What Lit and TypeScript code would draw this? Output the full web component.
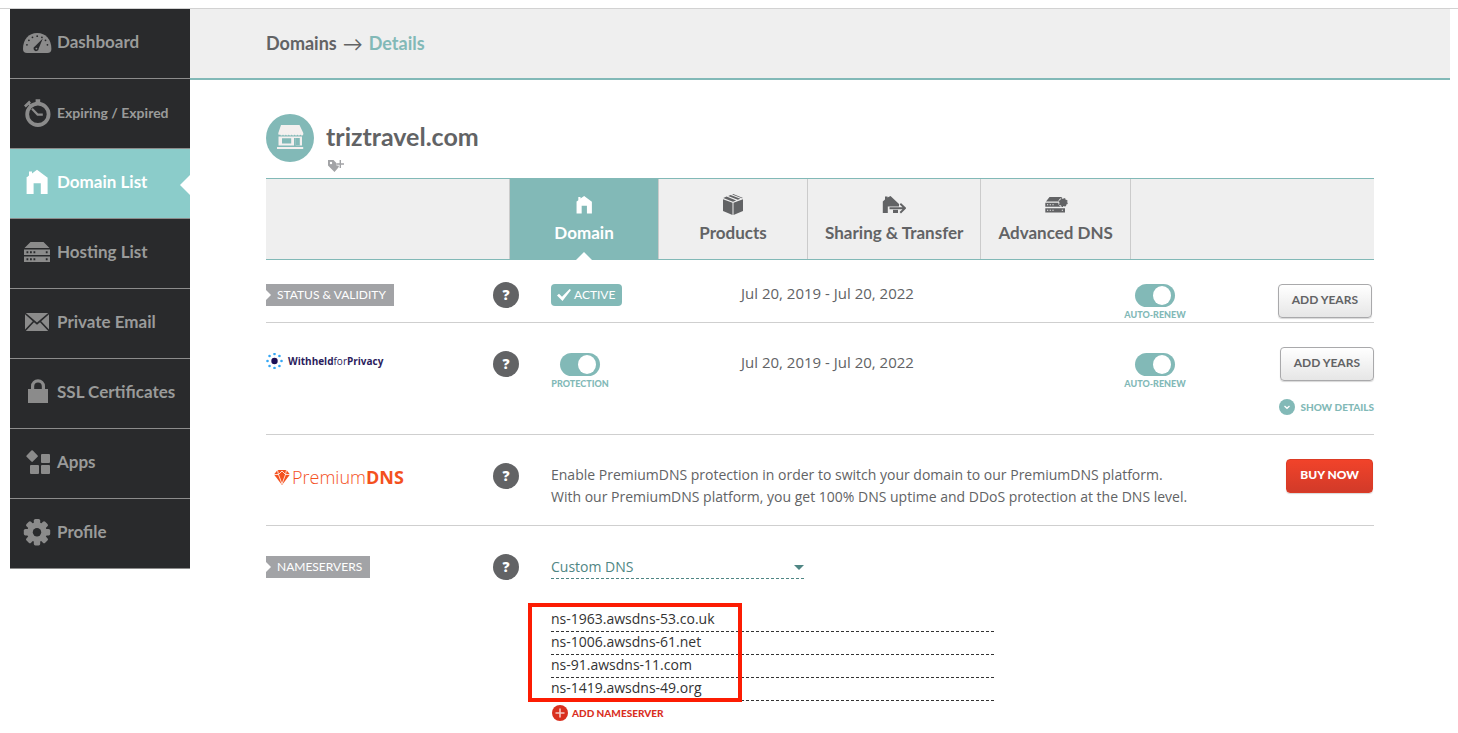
import { LitElement, html, svg, css, nothing, type TemplateResult, type SVGTemplateResult } from "lit";
import { customElement, property, state } from "lit/decorators.js";
import { classMap } from "lit/directives/class-map.js";

/* ---------- icons ---------- */

const ticks = [-80, -53, -27, 0, 27, 53, 80].map((a) => {
  const r = (a * Math.PI) / 180;
  return svg`<circle cx=${15.2 + 10.4 * Math.sin(r)} cy=${18.6 - 10.4 * Math.cos(r)} r="0.9" fill="#292a2c"/>`;
});

const cogTeeth = [0, 45, 90, 135].map(
  (a) => svg`<rect x="11.8" y="1" width="6.4" height="26.4" rx="1.6" transform="rotate(${a} 15 14.2)"/>`,
);

const housePath = "M4.6 26V10H4L7 7.6V3.4h3v2L15 1.8 26 10h-.4v16H18.800V15.200H11.600V26Z";

const navIcons: Record<string, SVGTemplateResult> = {
  gauge: svg`<path d="M1 21C1 11.500 6.500 5 15.200 5S29.400 11.500 29.400 21q0 4-4 4H5q-4 0-4-4Z"/>${ticks}
    <path d="M20.800 10.600 16.700 20.400A2.600 2.600 0 1 1 13 18.200Z" fill="#292a2c"/><circle cx="14.400" cy="20.600" r="0.900"/>`,
  clock: svg`<circle cx="15.900" cy="16.300" r="10.700" fill="none" stroke="currentColor" stroke-width="3.800"/>
    <path d="M13.600 1.200h4.600v4h-4.600ZM2 7.400 7.200 2.600 9 4.800 3.800 9.600Z"/><path d="M6 5 10 9" stroke="currentColor" stroke-width="2"/>
    <path d="M10 10.800 15.600 16.600H20.800" fill="none" stroke="currentColor" stroke-width="2.200"/>`,
  house: svg`<path d=${housePath}/>`,
  server: svg`<path d="M8.500 4H21.500L27.500 10H2.500ZM2 11.500H28v5.500H2ZM2 18.500H28V24H2Z"/>
    <path d="M4.500 13.200h1.800v2H4.500ZM8 13.200h1.800v2H8ZM11.500 13.200h1.800v2h-1.800ZM23.800 13.200h1.800v2h-1.800ZM4.500 20.200h1.800v2H4.500ZM8 20.200h1.800v2H8ZM11.500 20.200h1.800v2h-1.800ZM23.800 20.200h1.800v2h-1.800Z" fill="#292a2c"/>`,
  mail: svg`<path d="M3.800 5H26.200L15 14.600ZM3 6.300 10.800 13.200 3 21.600ZM27 6.300V21.600L19.200 13.200ZM12 14.200 15 16.800 18 14.200 26.200 23H3.800Z"/>`,
  lock: svg`<path d="M6 11H26V25H6Z"/><path d="M10.600 12V8.200a5.400 5.400 0 0 1 10.800 0V12" fill="none" stroke="currentColor" stroke-width="3.200"/>`,
  apps: svg`<rect x="5.700" y="3.700" width="8.800" height="8.800" rx="1" transform="rotate(45 10.100 8.100)"/>
    <rect x="19" y="6" width="9" height="9" rx="1"/><rect x="8" y="17" width="9" height="9" rx="1"/><rect x="19" y="17" width="9" height="9" rx="1"/>`,
  cog: svg`<circle cx="15" cy="14.200" r="10"/>${cogTeeth}<circle cx="15" cy="14.200" r="4.200" fill="#292a2c"/>`,
};

const tabIcons: Record<string, SVGTemplateResult> = {
  house: svg`<path transform="translate(1.200 2.600) scale(.73)" d=${housePath}/>`,
  box: svg`<path d="M2 7.200 11.500 10.800V23L2 19ZM22 7.200 12.500 10.800V23L22 19Z"/>
    <path d="M2.300 6 5.600 4.600 15.200 8.400 12 9.700ZM7.200 4 9.600 3 19.400 6.800 16.800 7.800ZM11.200 2.400 12.200 2 22 6 20.900 6.300Z"/>`,
  share: svg`<path d="M0.800 21V9.400L3 7.500V4.500h2.500V5.400L8.500 4 17 12v2.500H9.500V14.500H5.800V21Z"/>
    <path d="M11 17.800h5V21h-5Z"/><path d="M7.500 16.200H22M18.300 11.700 23 16.200 18.300 20.700" fill="none" stroke="currentColor" stroke-width="1.900"/>`,
  dns: svg`<path d="M5.500 5H18L19 9.500H2ZM1.300 10.800H21V14.800H1.300ZM1.300 16.200H21V20.400H1.300Z"/><circle cx="19.200" cy="10.500" r="5" fill="#efefef"/>
    <circle cx="19.200" cy="10.500" r="3.800"/><circle cx="19.200" cy="10.500" r="3.900" fill="none" stroke="currentColor" stroke-width="1.400" stroke-dasharray="1.600 1.460"/>
    <path d="M3 12.300h1.200v1H3ZM5.700 12.300h1.200v1H5.700ZM8.400 12.300h1.200v1H8.400ZM3 17.800h1.200v1H3ZM5.700 17.800h1.200v1H5.700ZM8.400 17.800h1.200v1H8.400ZM17.800 17.800h1.200v1h-1.200Z" fill="#efefef"/>`,
};

/* ---------- small elements ---------- */

@customElement("side-nav")
class SideNav extends LitElement {
  @property() current = "Domain List";

  static styles = css`
    :host { display: block; flex: 0 0 180px; }
    a {
      position: relative;
      display: flex;
      align-items: center;
      gap: 5px;
      height: 69px;
      padding-left: 12px;
      border-bottom: 1px solid #8c8c8c;
      background: #292a2c;
      color: #9a9b9a;
      font: 700 17px/24px Lato, sans-serif;
      text-decoration: none;
    }
    a.small { font-size: 14px; }
    svg { width: 30px; height: 31px; color: #8b8b8b; fill: currentColor; }
    span { padding-bottom: 3px; white-space: nowrap; }
    a.small span { padding-bottom: 2px; }
    a.on { background: #8bccca; color: #fff; }
    a.on svg { color: #fff; }
    a.on::after {
      content: "";
      position: absolute;
      right: 0;
      top: 26px;
      border: 10px solid transparent;
      border-right-color: #fff;
      border-left-width: 0;
    }
  `;

  render() {
    const items: [string, string][] = [
      ["Dashboard", "gauge"],
      ["Expiring / Expired", "clock"],
      ["Domain List", "house"],
      ["Hosting List", "server"],
      ["Private Email", "mail"],
      ["SSL Certificates", "lock"],
      ["Apps", "apps"],
      ["Profile", "cog"],
    ];
    return html`<nav>
      ${items.map(
        ([label, icon]) => html`<a
          href="#"
          class=${classMap({ on: label === this.current, small: label.length > 16 })}
          ><svg viewBox="0 0 30 31" aria-hidden="true">${navIcons[icon]}</svg><span>${label}</span></a
        >`,
      )}
    </nav>`;
  }
}

@customElement("toggle-switch")
class ToggleSwitch extends LitElement {
  @property() label = "";
  @state() private on = true;

  static styles = css`
    :host { display: block; }
    label {
      display: inline-flex;
      flex-direction: column;
      align-items: center;
      gap: 1px;
      min-width: 58px;
      color: #82b9b7;
      font: 900 9px/14px Lato, sans-serif;
      white-space: nowrap;
      cursor: pointer;
    }
    input {
      appearance: none;
      display: flex;
      width: 40px;
      height: 23px;
      margin: 0;
      padding: 2px 4px;
      border-radius: 12px;
      background: #b5b6b8;
      box-sizing: border-box;
    }
    input:checked { background: #82b9b7; justify-content: flex-end; }
    input::before {
      content: "";
      width: 18px;
      height: 19px;
      border-radius: 50%;
      background: #fff;
    }
  `;

  render() {
    return html`<label
      ><input type="checkbox" .checked=${this.on} @change=${() => (this.on = !this.on)} />${this.label}</label
    >`;
  }
}

/* ---------- page ---------- */

@customElement("app-root")
class AppRoot extends LitElement {
  static styles = css`
    :host {
      display: block;
      padding-top: 8px;
      background: #fff;
      color: #626365;
      font: 14px/22px "Open Sans", sans-serif;
    }
    svg { fill: currentColor; }
    button { font: inherit; color: inherit; cursor: pointer; }
    .page {
      display: flex;
      align-items: flex-start;
      padding: 0 8px 0 10px;
      border-top: 1px solid #d2d2d2;
    }
    main { flex: 1; min-width: 0; }
    .crumbs {
      display: flex;
      align-items: center;
      height: 69px;
      padding: 0 76px;
      background: #efefef;
      border-bottom: 2px solid #82b9b7;
      font: 700 18px/24px Lato, "DejaVu Sans", sans-serif;
    }
    .crumbs ol { display: flex; gap: 6px; margin: 0; padding: 0 0 2px; list-style: none; }
    .crumbs a { color: inherit; text-decoration: none; }
    .crumbs .here { color: #82b9b7; }
    .crumbs .arrow { font-weight: 400; font-size: 20px; }
    .body { padding: 34px 76px 12px; }

    .title { display: grid; grid-template: 44px 20px / 48px 1fr; column-gap: 12px; }
    .title .shop { display: block; width: 48px; height: 48px; }
    h1 { margin: 0; font: 700 25px/44px Lato, sans-serif; }
    .tagbtn {
      grid-column: 2;
      display: flex;
      align-items: flex-end;
      width: 20px;
      height: 16px;
      padding: 0;
      border: 0;
      background: none;
      color: #a2a3a6;
    }

    .tabs {
      display: flex;
      justify-content: center;
      background: #efefef;
      border: 1px solid #82b9b7;
      border-width: 1px 0;
    }
    .tab {
      position: relative;
      display: flex;
      flex-direction: column;
      align-items: center;
      gap: 5px;
      box-sizing: border-box;
      min-width: 149px;
      height: 80px;
      padding: 13px 17px 0;
      border-right: 1px solid #cbcbcb;
      color: #626365;
      font: 700 17px/24px Lato, sans-serif;
      text-decoration: none;
      white-space: nowrap;
    }
    .tab:first-child { min-width: 150px; border-left: 1px solid #cbcbcb; }
    .tab svg { width: 24px; height: 24px; }
    .tab.on { background: #82b9b7; color: #fff; }
    .tab.on::after {
      content: "";
      position: absolute;
      bottom: -1px;
      border: 8px solid transparent;
      border-bottom-color: #fff;
      border-top-width: 0;
    }

    .row {
      display: grid;
      grid-template-columns: 227px 58px 190px minmax(0, 1fr) 60px 189px;
      align-items: start;
      padding: 22px 0 0;
      border-bottom: 1px solid #cfcfcf;
    }
    .cell, .act { padding-top: 2px; }
    .row.tall { padding: 24px 0 19px; }
    .tall .help { margin-top: 4px; }
    .tall .cell { padding-top: 6px; }
    .tall .act { padding-top: 0; }
    .row.dns { grid-template-columns: 227px 58px minmax(0, 1fr) auto; padding-bottom: 17px; }
    .dns .cell { padding-top: 5px; }
    .row.last { padding: 28px 0 0; border: 0; }
    .rest { grid-column: 3 / 7; }
    p { margin: 0; }
    .date { font-size: 15px; line-height: 18px; }
    .toggle { display: flex; justify-content: center; }

    .tag {
      position: relative;
      display: inline-block;
      vertical-align: top;
      padding: 0 8px 0 11px;
      background: #a2a3a6;
      color: #fff;
      font: 400 12px/22px Lato, sans-serif;
    }
    .tag::before {
      content: "";
      position: absolute;
      left: 0;
      top: 6px;
      border: 5px solid transparent;
      border-left-color: #fff;
      border-right-width: 0;
    }
    .help {
      width: 26px;
      height: 26px;
      padding: 0;
      border: 0;
      border-radius: 50%;
      background: #626365;
      color: #fff;
      font: 800 14px/26px "Open Sans", sans-serif;
    }
    .active {
      display: inline-flex;
      vertical-align: top;
      align-items: center;
      gap: 2px;
      padding: 0 7px 0 5px;
      border-radius: 4px;
      background: #82b9b7;
      color: #fff;
      font: 400 12px/22px Lato, sans-serif;
    }
    .act { display: flex; flex-direction: column; align-items: flex-end; gap: 18px; }
    .btn {
      height: 34px;
      padding: 0 13px 2px;
      border: 1px solid #a9a9ab;
      border-radius: 4px;
      background: linear-gradient(#fff, #e6e6e6);
      box-shadow: 0 1px 1px #d8d8d8;
      font: 700 12px/20px Lato, sans-serif;
      white-space: nowrap;
    }
    .first .btn { margin-right: 2px; }
    .btn.buy {
      margin-right: 1px;
      border-color: #dc3b25;
      background: linear-gradient(#f1432a, #d23a29);
      color: #fff;
      font-weight: 900;
    }
    .link {
      display: flex;
      align-items: center;
      gap: 5px;
      padding: 0;
      border: 0;
      background: none;
      color: #82b9b7;
      font: 900 10px/16px Lato, sans-serif;
      white-space: nowrap;
    }
    .link svg { width: 16px; height: 16px; }
    .link.add { margin-top: 4px; padding-left: 1px; gap: 4px; color: #d9301f; }

    .withheld { display: flex; align-items: center; gap: 5px; color: #2b1c5c; font-size: 10px; line-height: 16px; }
    .premium { display: flex; align-items: center; gap: 2px; padding-left: 8px; color: #f4511e; font-size: 18px; line-height: 26px; font-weight: 300; }
    .premium b { font-weight: 700; }

    .pick { display: flex; align-items: center; width: 253px; border-bottom: 1px dashed #4f8684; color: #4f8684; }
    .pick select {
      appearance: none;
      flex: 1;
      height: 22px;
      padding: 0 0 2px;
      border: 0;
      background: none;
      color: inherit;
      font: inherit;
    }
    .pick svg { width: 10px; height: 5px; pointer-events: none; }
    .servers { position: relative; max-width: 443px; margin: 30px 0 0; padding: 0; list-style: none; }
    .servers input {
      display: block;
      box-sizing: border-box;
      width: 100%;
      height: 23px;
      padding: 0 0 3px;
      border: 0;
      border-bottom: 1px dashed #333;
      background: none;
      color: #333;
      font: inherit;
    }
    .mark {
      position: absolute;
      inset: -6px auto -1px -23px;
      width: 214px;
      box-sizing: border-box;
      border: 4px solid #fc1c03;
      pointer-events: none;
    }
  `;

  private tab(label: string, icon: string, on = false) {
    return html`<a href="#" class=${classMap({ tab: true, on })}
      ><svg viewBox="0 0 24 24" aria-hidden="true">${tabIcons[icon]}</svg>${label}</a
    >`;
  }

  private row(kind: string, label: TemplateResult, content: TemplateResult | typeof nothing) {
    return html`<section class="row ${kind}">
      <div class="cell">${label}</div>
      <button class="help" aria-label="Help">?</button>
      ${content}
    </section>`;
  }

  render() {
    const burst = [0, 45, 90, 135, 180, 225, 270, 315];
    const servers = ["ns-1963.awsdns-53.co.uk", "ns-1006.awsdns-61.net", "ns-91.awsdns-11.com", "ns-1419.awsdns-49.org"];
    const renew = html`<div class="cell toggle"><toggle-switch label="AUTO-RENEW"></toggle-switch></div>`;
    const date = html`<p class="cell date">Jul 20, 2019 - Jul 20, 2022</p>`;

    return html`<div class="page">
      <side-nav></side-nav>
      <main>
        <div class="crumbs">
          <ol>
            <li><a href="#">Domains</a></li>
            <li class="arrow" aria-hidden="true">→</li>
            <li class="here">Details</li>
          </ol>
        </div>
        <div class="body">
          <header class="title">
            <svg class="shop" viewBox="0 0 48 48" aria-hidden="true">
              <circle cx="24" cy="24" r="24" fill="#82b9b7" />
              <path
                d="M15 11H33.500L37.300 19v1.200a1.500 1.500 0 0 1-2.900.3 1.500 1.500 0 0 1-2.900 0 1.500 1.500 0 0 1-2.900 0 1.500 1.500 0 0 1-2.900 0 1.500 1.500 0 0 1-2.900 0 1.500 1.500 0 0 1-2.900 0 1.500 1.500 0 0 1-2.900 0 1.500 1.500 0 0 1-2.900 0 1.500 1.500 0 0 1-1.800-.3V19Z"
                fill="#f4f0ef"
              />
              <path d="M12.500 22.500H36V31.500H12.500ZM16 24.200V29.500H25.200V24.200ZM28 24V31.500H29.800V24Z" fill="#f4f0ef" fill-rule="evenodd" />
              <path d="M29.800 24H33.800V31.500H29.800Z" fill="#82b9b7" /><path d="M11 33H37.200V35H11Z" fill="#f4f0ef" />
            </svg>
            <h1>triztravel.com</h1>
            <button class="tagbtn" aria-label="Add tag">
              <svg width="20" height="14" viewBox="0 0 20 14">
                <path d="M2 0H7.500L13.500 6.200 8.500 12 2 5.500ZM5 1.800A1.200 1.200 0 1 0 5 4.200 1.200 1.200 0 1 0 5 1.800Z" fill-rule="evenodd" />
                <path d="M10.500 4H18M14.300 0V8" stroke="#fff" stroke-width="3" /><path d="M10.500 4H18M14.300 0V8" stroke="currentColor" stroke-width="1.400" />
              </svg>
            </button>
          </header>

          <nav class="tabs">
            ${this.tab("Domain", "house", true)} ${this.tab("Products", "box")}
            ${this.tab("Sharing & Transfer", "share")} ${this.tab("Advanced DNS", "dns")}
          </nav>

          ${this.row(
            "first",
            html`<span class="tag">STATUS &amp; VALIDITY</span>`,
            html`<div class="cell">
                <span class="active"
                  ><svg width="16" height="14" viewBox="0 0 16 14" aria-hidden="true">
                    <path d="M1 7.500 3 5.800 6 8.800 13.600 1 15 2 6.500 13Z" /></svg
                  >ACTIVE</span
                >
              </div>
              ${date} ${renew}
              <div class="act"><button class="btn">ADD YEARS</button></div>`,
          )}
          ${this.row(
            "tall",
            html`<div class="withheld">
              <svg width="17" height="16" viewBox="0 0 17 16" aria-hidden="true">
                <circle cx="8.500" cy="8" r="3.200" fill="#1d1057" />
                ${burst.map((a) => {
                  const r = (a * Math.PI) / 180;
                  return svg`<circle cx=${8.5 + 7 * Math.cos(r)} cy=${8 + 7 * Math.sin(r)} r="1.300" fill="#35a7f5"/>`;
                })}
              </svg>
              <span><b>Withheld</b>for<b>Privacy</b></span>
            </div>`,
            html`<div class="cell"><toggle-switch label="PROTECTION"></toggle-switch></div>
              ${date} ${renew}
              <div class="act">
                <button class="btn">ADD YEARS</button>
                <button class="link">
                  <svg viewBox="0 0 16 16" aria-hidden="true">
                    <circle cx="8" cy="8" r="8" /><path d="M5.500 7 8 9.300 10.500 7" fill="none" stroke="#fff" stroke-width="1.300" /></svg
                  >SHOW DETAILS
                </button>
              </div>`,
          )}
          ${this.row(
            "tall dns",
            html`<div class="premium">
              <svg width="16" height="16" viewBox="0 0 16 16" aria-hidden="true">
                <path d="M3.500 1H12.500L16 5.500 8 16 0 5.500Z" />
                <path d="M0 5.500H4.500L8 2 11.500 5.500H16M4.500 5.500 8 15 11.500 5.500M3.500 1 4.500 5.500M12.500 1 11.500 5.500" fill="none" stroke="#fff" stroke-width="0.800" />
              </svg>
              <span>Premium<b>DNS</b></span>
            </div>`,
            html`<div class="cell">
                <p>Enable PremiumDNS protection in order to switch your domain to our PremiumDNS platform.</p>
                <p>With our PremiumDNS platform, you get 100% DNS uptime and DDoS protection at the DNS level.</p>
              </div>
              <div class="act"><button class="btn buy">BUY NOW</button></div>`,
          )}
          ${this.row(
            "last",
            html`<span class="tag">NAMESERVERS</span>`,
            html`<div class="cell rest">
              <div class="pick">
                <select aria-label="Nameserver type">
                  <option>Custom DNS</option>
                </select>
                <svg viewBox="0 0 10 5" aria-hidden="true"><path d="M0 0H10L5 5Z" /></svg>
              </div>
              <ul class="servers">
                ${servers.map((s, i) => html`<li><input type="text" aria-label="Nameserver ${i + 1}" .value=${s} /></li>`)}
                <li class="mark" aria-hidden="true"></li>
              </ul>
              <button class="link add">
                <svg viewBox="0 0 16 16" aria-hidden="true">
                  <circle cx="8" cy="8" r="8" /><path d="M3.500 8H12.500M8 3.500V12.500" stroke="#f5c9c4" stroke-width="1.600" /></svg
                >ADD NAMESERVER
              </button>
            </div>`,
          )}
        </div>
      </main>
    </div>`;
  }
}
